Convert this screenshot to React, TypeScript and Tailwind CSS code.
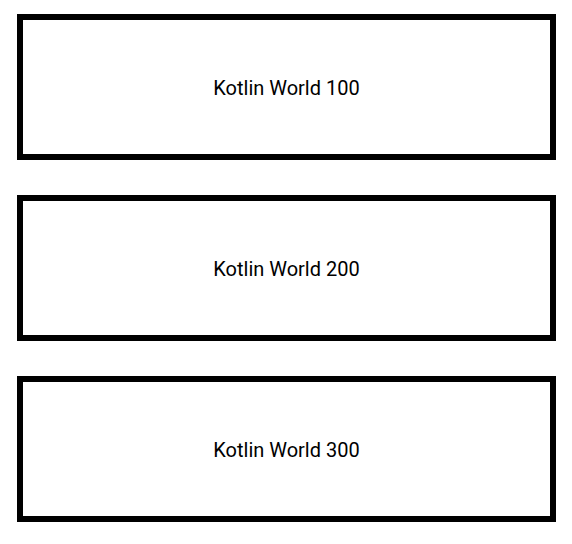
export default function App() {
  const items = [100, 200, 300];

  return (
    <div className="w-[572px] h-[544px] bg-white pt-[14px] px-[17px] flex flex-col gap-[35px] font-['Roboto',sans-serif]">
      {items.map((n) => (
        <div
          key={n}
          className="w-[539px] h-[146px] border-[6px] border-black flex items-center justify-center"
        >
          <span className="text-[20px] leading-none pt-[2px] text-black">Kotlin World {n}</span>
        </div>
      ))}
    </div>
  );
}
